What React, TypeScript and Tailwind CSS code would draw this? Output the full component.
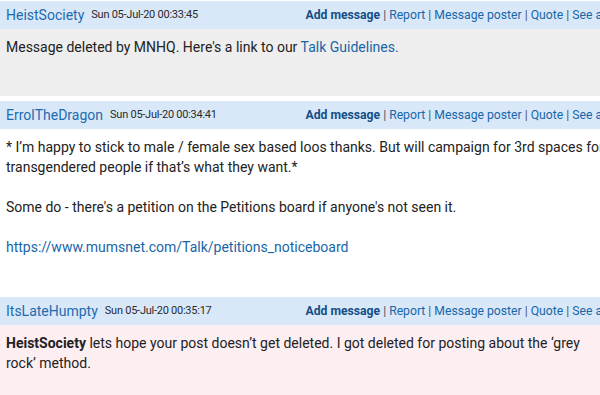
const font = { fontFamily: "Roboto, 'Liberation Sans', sans-serif" };

function Header({ name, date }: { name: string; date: string }) {
  return (
    <div className="flex items-center h-[28px] bg-[#d8e8f9] pl-[6px] pr-[8px] whitespace-nowrap">
      <span className="text-[14px] text-[#1d6bae]">{name}</span>
      <span className="ml-[7px] text-[11px] text-[#2a2a2a] tracking-[-0.25px]">{date}</span>
      <span className="ml-auto text-[12.2px] text-[#1766a8]">
        <b className="text-[#124f87]">Add message</b>
        <span className="text-[#555]"> | </span>Report
        <span className="text-[#555]"> | </span>Message poster
        <span className="text-[#555]"> | </span>Quote
        <span className="text-[#555]"> | </span>See all
      </span>
    </div>
  );
}

export default function App() {
  return (
    <div className="w-[600px] h-[395px] overflow-hidden bg-white" style={font}>
      <div className="w-[616px] pt-[1px] text-[14px] leading-[20px] text-[#222]">
        <Header name="HeistSociety" date="Sun 05-Jul-20 00:33:45" />
        <div className="bg-[#eeeeee] px-[6px] pt-[8px] pb-[39px]">
          Message deleted by MNHQ. Here's a link to our{" "}
          <span className="text-[#1766a8]">Talk Guidelines.</span>
        </div>

        <div className="mt-[5px]">
          <Header name="ErrolTheDragon" date="Sun 05-Jul-20 00:34:41" />
          <div className="px-[6px] pt-[8px] pb-[40px]">
            <p>
              * I’m happy to stick to male / female sex based loos thanks. But will campaign for 3rd spaces for
              transgendered people if that’s what they want.*
            </p>
            <p className="mt-[20px]">Some do - there's a petition on the Petitions board if anyone's not seen it.</p>
            <p className="mt-[20px] text-[#1766a8]">https://www.mumsnet.com/Talk/petitions_noticeboard</p>
          </div>
        </div>

        <div>
          <Header name="ItsLateHumpty" date="Sun 05-Jul-20 00:35:17" />
          <div className="bg-[#fdeef2] px-[6px] pt-[8px] pb-[40px]">
            <b>HeistSociety</b> lets hope your post doesn’t get deleted. I got deleted for posting about the ‘grey
            rock’ method.
          </div>
        </div>
      </div>
    </div>
  );
}
